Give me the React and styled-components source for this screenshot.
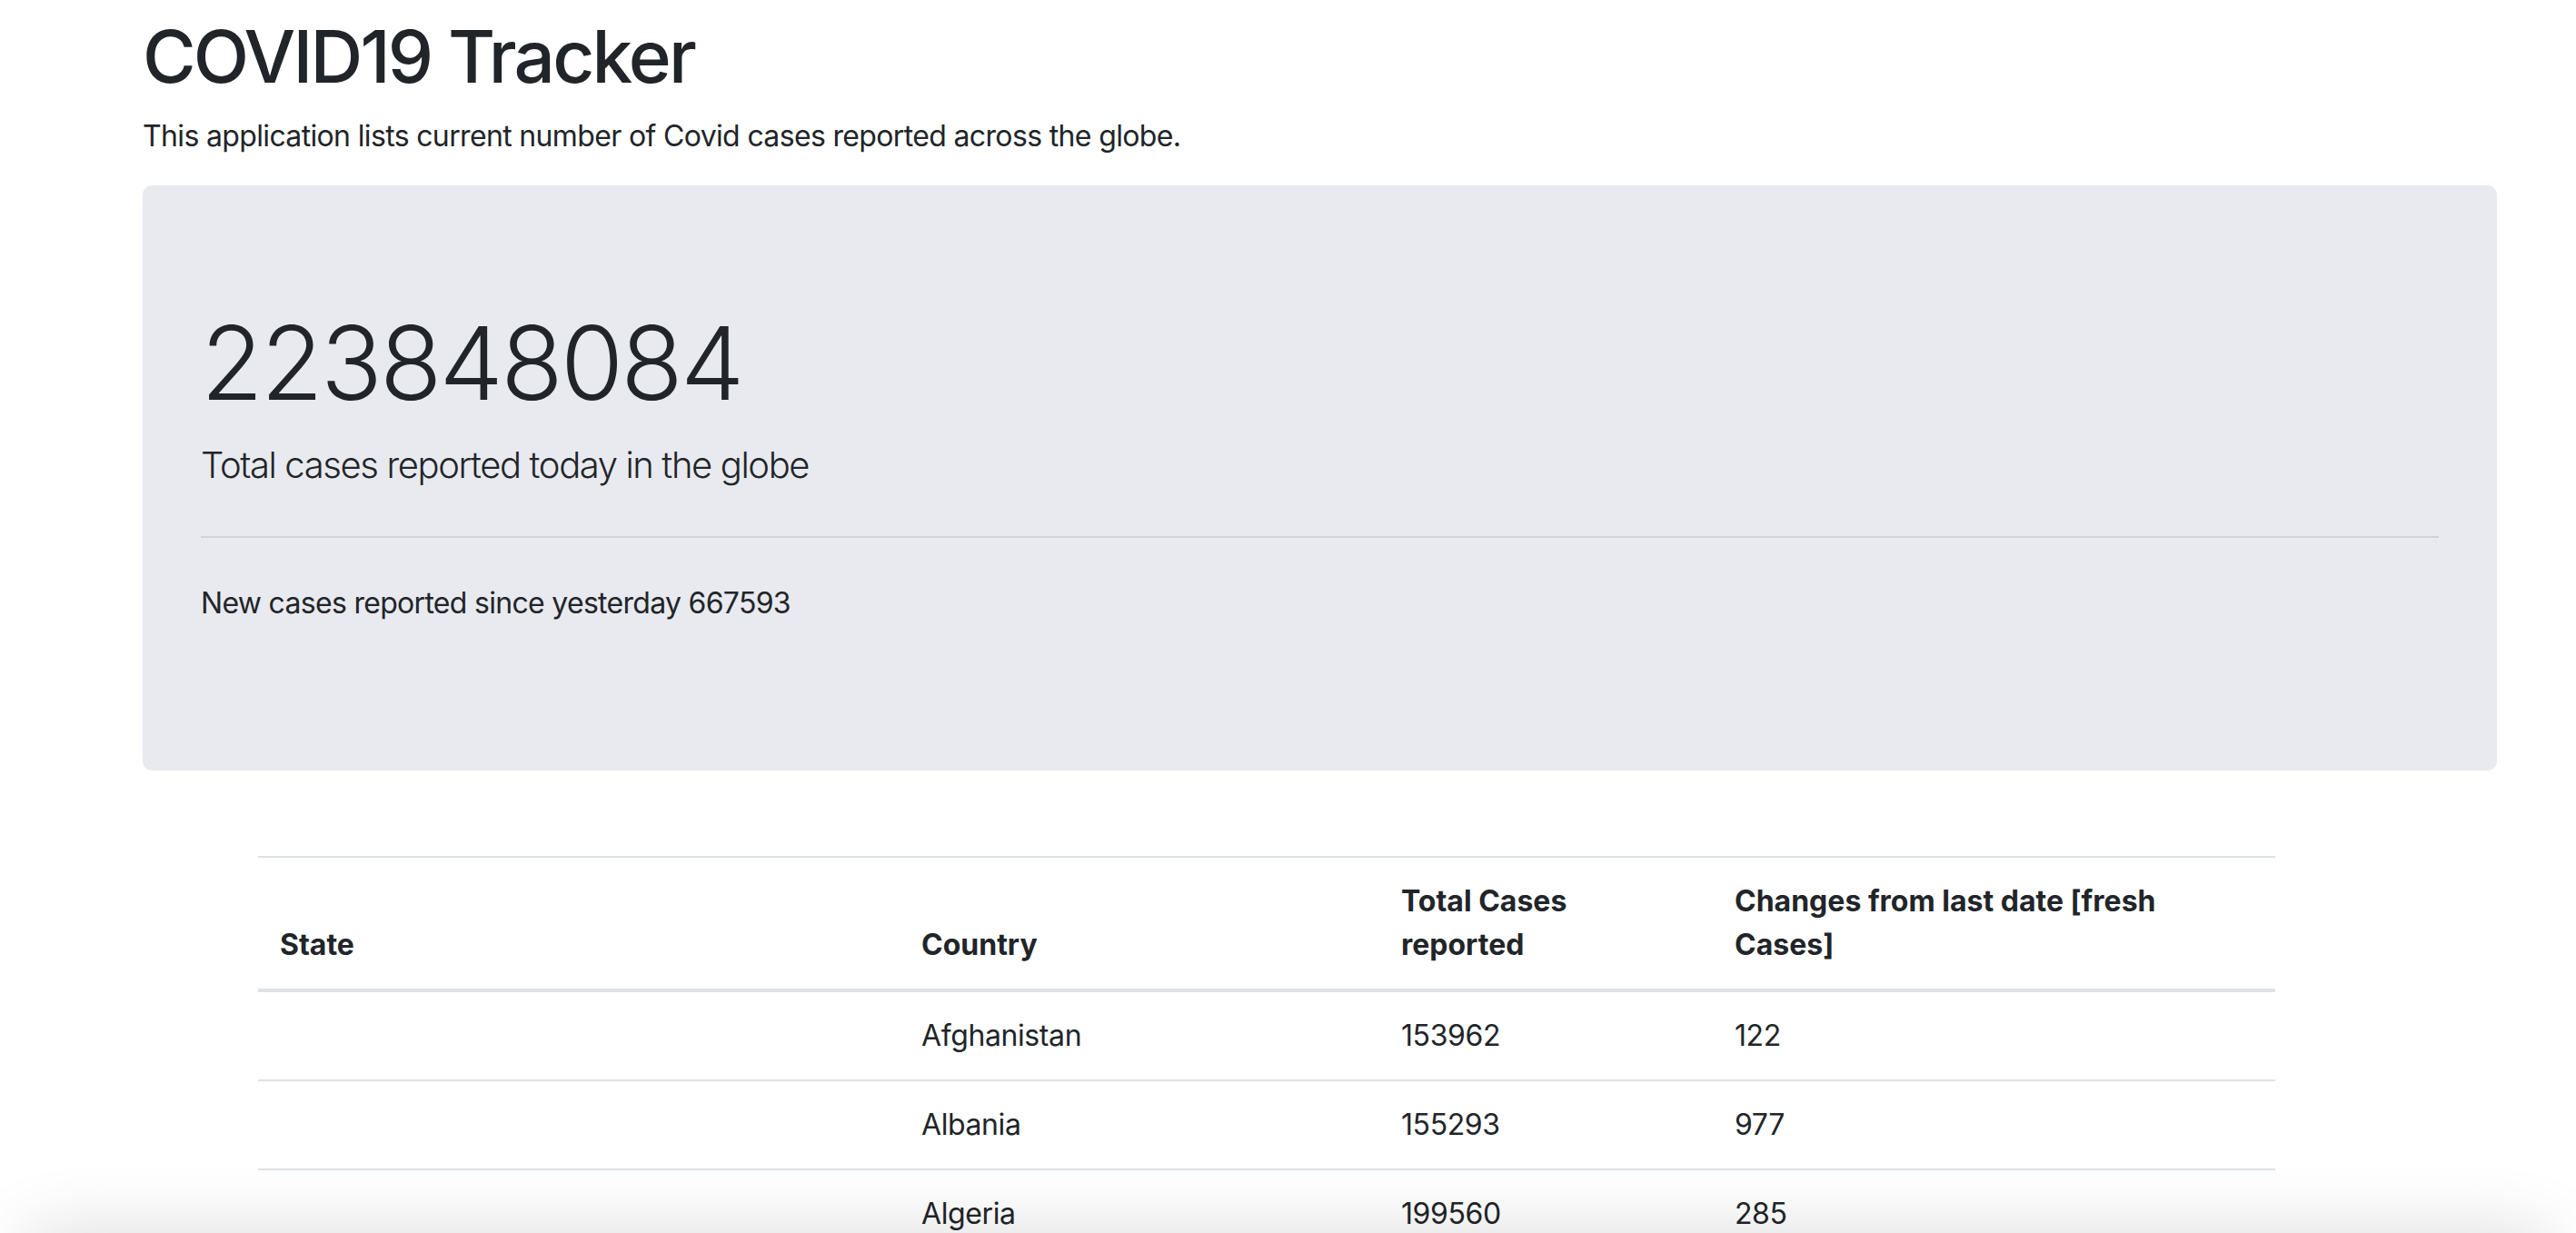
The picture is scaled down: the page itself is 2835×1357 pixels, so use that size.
import React from "react";
import styled, { createGlobalStyle } from "styled-components";

const GlobalStyle = createGlobalStyle`
  html, body {
    margin: 0;
    padding: 0;
    background: #fff;
  }
  body {
    font-family: Inter, "Noto Sans", "Liberation Sans", sans-serif;
    color: #212529;
    font-size: 32px;
    line-height: 1.5;
  }
  * {
    box-sizing: border-box;
  }
`;

const Page = styled.div`
  width: 2591px;
  margin-left: 157px;
  padding-top: 14px;
`;

const Title = styled.h1`
  margin: 0 0 16px;
  font-size: 80px;
  font-weight: 500;
  line-height: 1.2;
  letter-spacing: -2.8px;
`;

const Intro = styled.p`
  margin: 0 0 30px;
  font-size: 32px;
  line-height: 1.5;
  letter-spacing: -0.65px;
`;

const Jumbotron = styled.section`
  background: #e9eaef;
  border-radius: 10px;
  padding: 128px 64px;
  margin-bottom: 94px;
`;

const BigNumber = styled.h2`
  margin: 0 0 16px;
  font-size: 112px;
  font-weight: 300;
  line-height: 1.2;
  letter-spacing: -2.8px;
`;

const Lead = styled.p`
  margin: 0;
  font-size: 40px;
  font-weight: 300;
  line-height: 1.5;
  letter-spacing: -1.4px;
`;

const Divider = styled.hr`
  margin: 48px 0;
  border: 0;
  border-top: 2px solid rgba(0, 0, 0, 0.1);
`;

const Note = styled.p`
  margin: 0 0 32px;
  font-size: 32px;
  line-height: 1.5;
  letter-spacing: -0.7px;
`;

const TableWrap = styled.div`
  margin-left: 127px;
  width: 2220px;
`;

const Table = styled.table`
  width: 100%;
  border-collapse: collapse;
  table-layout: fixed;
`;

const HeadCell = styled.th`
  text-align: left;
  vertical-align: bottom;
  font-weight: 700;
  padding: 24px;
  line-height: 48px;
  border-top: 2px solid #dee2e6;
  border-bottom: 4px solid #dee2e6;
`;

const Cell = styled.td`
  padding: 24px;
  line-height: 48px;
  vertical-align: top;
  letter-spacing: -0.4px;
  border-top: 2px solid #dee2e6;
`;

const Row = styled.tr`
  &:first-child td {
    border-top: 0;
  }
`;

const BottomShade = styled.div`
  position: fixed;
  left: 30px;
  right: 30px;
  top: 100vh;
  height: 40px;
  margin-top: 12px;
  background: #d9d9d9;
  box-shadow: 0 0 80px 6px rgba(0, 0, 0, 0.19);
  border-radius: 40px;
  pointer-events: none;
`;

const rows = [
  { state: "", country: "Afghanistan", total: 153962, fresh: 122 },
  { state: "", country: "Albania", total: 155293, fresh: 977 },
  { state: "", country: "Algeria", total: 199560, fresh: 285 },
  { state: "", country: "Andorra", total: 15267, fresh: 0 },
  { state: "", country: "Angola", total: 57279, fresh: 114 },
];

export default function App() {
  return (
    <>
      <GlobalStyle />
      <Page>
        <Title>COVID19 Tracker</Title>
        <Intro>This application lists current number of Covid cases reported across the globe.</Intro>

        <Jumbotron>
          <BigNumber>223848084</BigNumber>
          <Lead>Total cases reported today in the globe</Lead>
          <Divider />
          <Note>New cases reported since yesterday 667593</Note>
        </Jumbotron>

        <TableWrap>
          <Table>
            <colgroup>
              <col style={{ width: 706 }} />
              <col style={{ width: 528 }} />
              <col style={{ width: 367 }} />
              <col style={{ width: 619 }} />
            </colgroup>
            <thead>
              <tr>
                <HeadCell>State</HeadCell>
                <HeadCell>Country</HeadCell>
                <HeadCell>
                  Total Cases
                  <br />
                  reported
                </HeadCell>
                <HeadCell>
                  Changes from last date [fresh
                  <br />
                  Cases]
                </HeadCell>
              </tr>
            </thead>
            <tbody>
              {rows.map((r) => (
                <Row key={r.country}>
                  <Cell>{r.state}</Cell>
                  <Cell>{r.country}</Cell>
                  <Cell>{r.total}</Cell>
                  <Cell>{r.fresh}</Cell>
                </Row>
              ))}
            </tbody>
          </Table>
        </TableWrap>
      </Page>
      <BottomShade />
    </>
  );
}
